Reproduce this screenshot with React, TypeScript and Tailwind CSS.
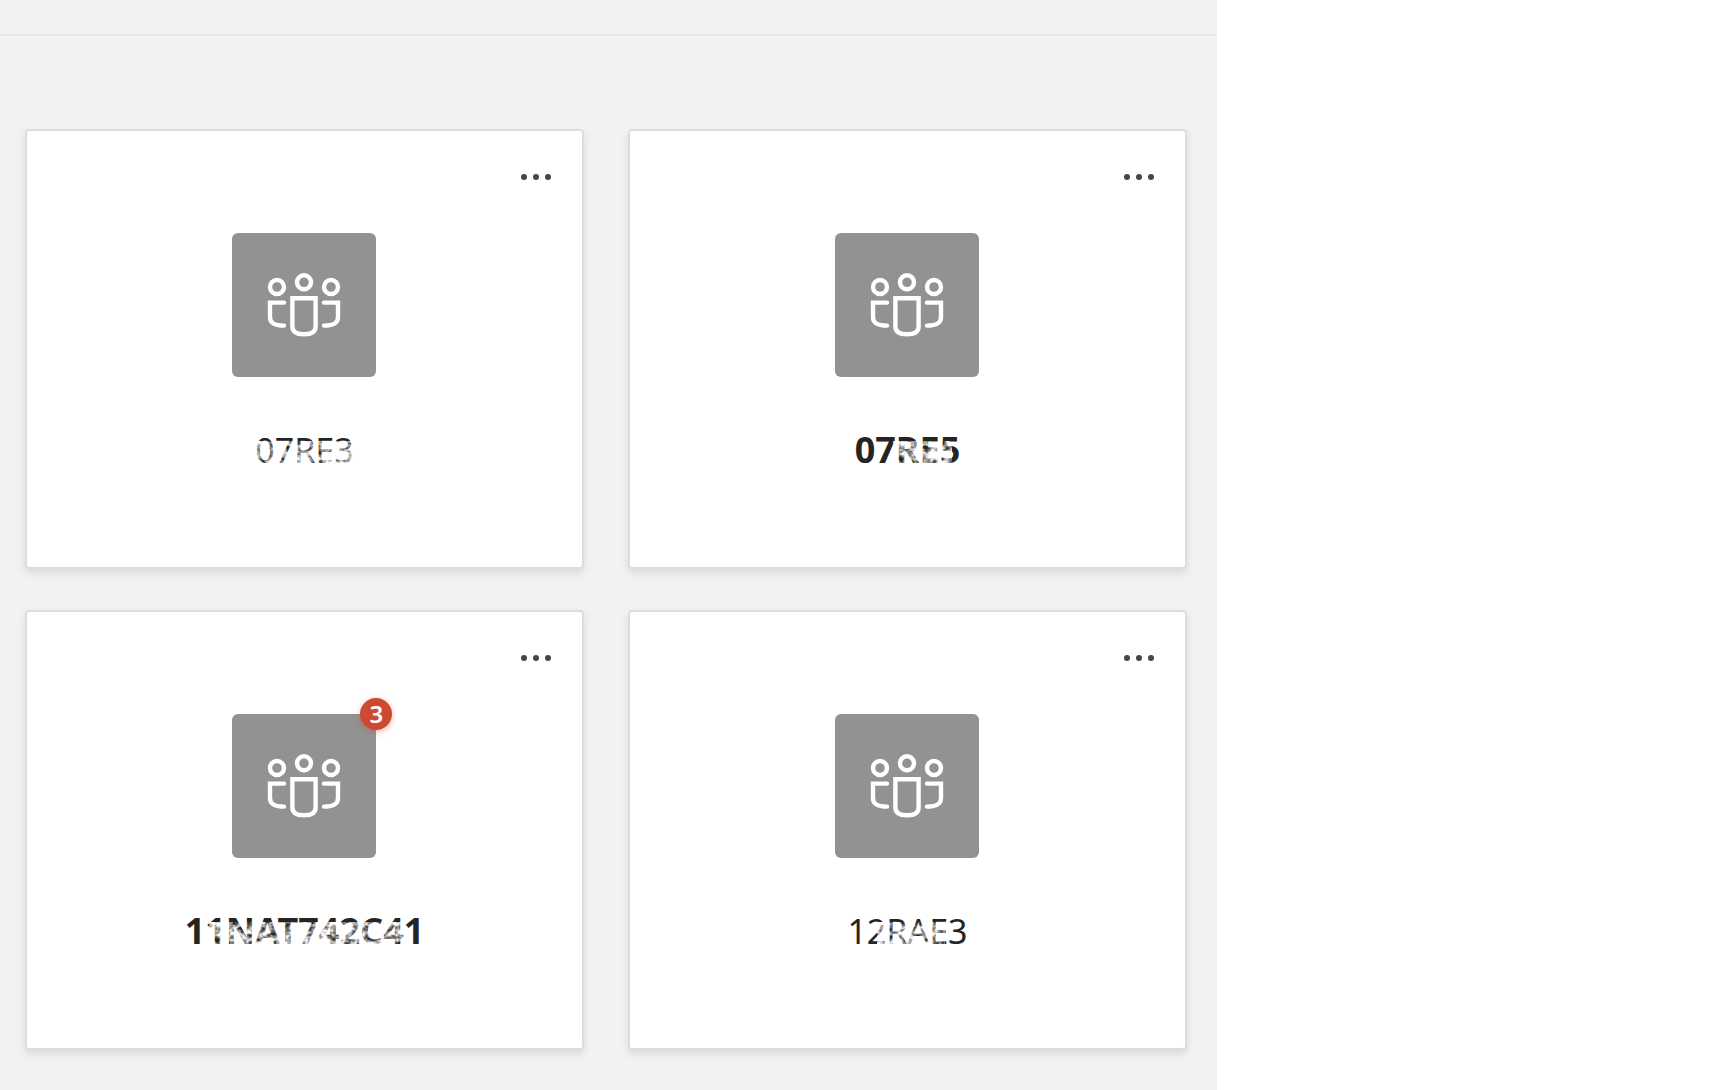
import React from "react";
import clsx from "clsx";

interface Team {
  name: string;
  unread: boolean;
  mentions?: number;
  // worn part of the name, counted from the left edge of the text
  worn: string;
}

const teams: Team[] = [
  { name: "07RE3", unread: false, worn: "left-0 right-0" },
  { name: "07RE5", unread: true, worn: "left-[36%] right-[8%]" },
  { name: "11NAT742C41", unread: true, mentions: 3, worn: "left-[10%] right-[8%]" },
  { name: "12RAE3", unread: false, worn: "left-[25%] right-[19%]" },
];

const PeopleIcon: React.FC = () => (
  <svg
    viewBox="0 0 144 144"
    className="h-full w-full"
    fill="none"
    stroke="white"
    strokeWidth="4.4"
    aria-hidden="true"
  >
    <circle cx="72" cy="49.3" r="7" />
    <circle cx="45" cy="54" r="7" />
    <circle cx="99" cy="54" r="7" />
    <path d="M60.4 65.2H83.6V93.5C83.6 99 79 101.3 72 101.3S60.4 99 60.4 93.5Z" />
    <path d="M52 69.6H38V84C38 90.5 42.5 92.6 52 92.6" strokeLinecap="round" />
    <path d="M92 69.6H106V84C106 90.5 101.5 92.6 92 92.6" strokeLinecap="round" />
  </svg>
);

const Scratches: React.FC<{ id: string; className: string }> = ({
  id,
  className,
}) => (
  <span className={clsx("pointer-events-none absolute top-4 bottom-3", className)}>
    <svg className="block h-full w-full" aria-hidden="true">
      <filter
        id={id}
        x="0"
        y="0"
        width="100%"
        height="100%"
        colorInterpolationFilters="sRGB"
      >
        <feTurbulence type="fractalNoise" baseFrequency="0.16 0.2" numOctaves="2" seed="8" />
        <feColorMatrix values="0 0 0 0 1  0 0 0 0 1  0 0 0 0 1  2.2 0 0 0 -0.55" />
      </filter>
      <rect width="100%" height="100%" filter={`url(#${id})`} />
    </svg>
  </span>
);

const TeamCard: React.FC<{ team: Team }> = ({ team }) => {
  return (
    <article className="flex h-[440px] flex-col rounded border-2 border-[#dedddc] bg-white shadow-[0_4px_8px_rgba(0,0,0,0.1)]">
      <div className="flex justify-end px-6 pt-8">
        <button
          type="button"
          aria-label={`More options for ${team.name}`}
          className="flex h-7 items-center gap-[6px] px-[7px]"
        >
          <span className="size-[6px] rounded-full bg-[#484644]" />
          <span className="size-[6px] rounded-full bg-[#484644]" />
          <span className="size-[6px] rounded-full bg-[#484644]" />
        </button>
      </div>

      <div className="relative mx-auto mt-[42px] size-36 rounded-md bg-[#929292]">
        <PeopleIcon />
        {team.mentions && (
          <span className="absolute -top-4 -right-4 flex size-8 items-center justify-center rounded-full bg-[#cc4a31] text-2xl font-semibold text-white shadow-[0_2px_6px_rgba(204,74,49,0.4)]">
            {team.mentions}
          </span>
        )}
      </div>

      <h2
        className={clsx(
          "relative mx-auto mt-12 leading-[50px] text-[#252423]",
          team.unread ? "text-[36px] font-bold" : "text-[34px] font-normal"
        )}
      >
        {team.name}
        <Scratches id={`worn-${team.name}`} className={team.worn} />
      </h2>
    </article>
  );
};

const App: React.FC = () => {
  return (
    <div className="min-h-screen bg-white font-['Noto_Sans','Open_Sans',sans-serif]">
      <main className="min-h-screen w-[71%] bg-[#f3f2f1]">
        <header className="h-9 border-b-2 border-[#e8e7e6]" />
        <section className="grid grid-cols-2 gap-x-11 gap-y-[41px] pt-[93px] pr-[30px] pb-10 pl-[25px]">
          {teams.map((team) => (
            <TeamCard key={team.name} team={team} />
          ))}
        </section>
      </main>
    </div>
  );
};

export default App;
